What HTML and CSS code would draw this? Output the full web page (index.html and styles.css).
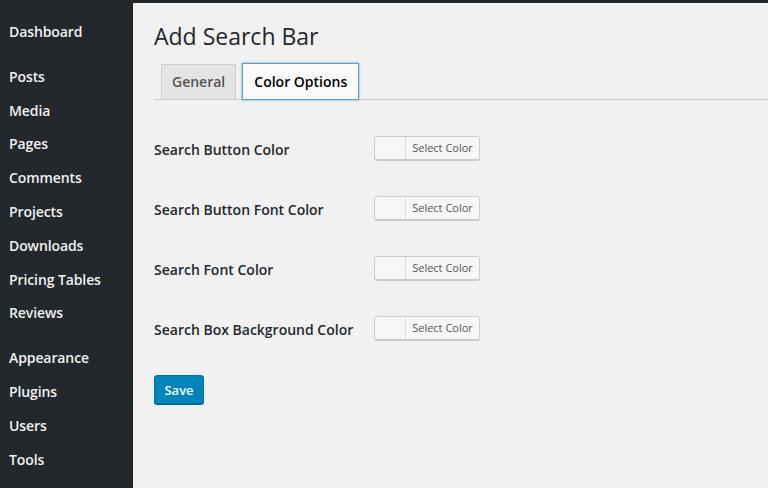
FILE: index.html
```html
<!DOCTYPE html>
<html>
<head>
<meta charset="utf-8">
<link rel="stylesheet" href="styles.css">
</head>
<body>
<div class="topbar"></div>
<div class="layout">
  <nav class="sidebar">
    <ul class="menu">
      <li class="item first">Dashboard</li>
      <li class="item sep">Posts</li>
      <li class="item">Media</li>
      <li class="item">Pages</li>
      <li class="item">Comments</li>
      <li class="item">Projects</li>
      <li class="item">Downloads</li>
      <li class="item">Pricing Tables</li>
      <li class="item">Reviews</li>
      <li class="item sep">Appearance</li>
      <li class="item">Plugins</li>
      <li class="item">Users</li>
      <li class="item">Tools</li>
    </ul>
  </nav>
  <main class="content">
    <h1 class="title">Add Search Bar</h1>
    <div class="tabs">
      <span class="tab">General</span>
      <span class="tab active">Color Options</span>
    </div>
    <div class="form">
      <div class="row">
        <span class="label">Search Button Color</span>
        <span class="picker"><span class="swatch"></span><span class="pick-btn">Select Color</span></span>
      </div>
      <div class="row">
        <span class="label">Search Button Font Color</span>
        <span class="picker"><span class="swatch"></span><span class="pick-btn">Select Color</span></span>
      </div>
      <div class="row">
        <span class="label">Search Font Color</span>
        <span class="picker"><span class="swatch"></span><span class="pick-btn">Select Color</span></span>
      </div>
      <div class="row">
        <span class="label">Search Box Background Color</span>
        <span class="picker"><span class="swatch"></span><span class="pick-btn">Select Color</span></span>
      </div>
    </div>
    <button class="save">Save</button>
  </main>
</div>
</body>
</html>
```
FILE: styles.css
```css
* { box-sizing: border-box; }
html, body { margin: 0; padding: 0; height: 100%; }
body {
  font-family: "Open Sans", "Noto Sans", sans-serif;
  background: #f1f1f1;
  overflow: hidden;
}
.topbar { height: 3px; background: #23282d; }
.layout { display: flex; height: 485px; }
.sidebar {
  width: 133px;
  flex: none;
  background: #23282d;
  border-right: 1px solid #1a1d21;
}
.menu { list-style: none; margin: 0; padding: 0; }
.item {
  color: #f0f0f0;
  font-size: 14px;
  font-weight: 600;
  height: 33.8px;
  line-height: 33.8px;
  padding-left: 9px;
  letter-spacing: -0.1px;
}
.item.first { margin-top: 12px; }
.item.sep { margin-top: 11px; }
.content { flex: 1; padding: 0 0 0 21px; }
.title {
  margin: 15px 0 0;
  font-size: 23px;
  font-weight: 400;
  color: #23282d;
  line-height: 36px;
  height: 43px;
}
.tabs {
  display: flex;
  align-items: flex-end;
  gap: 6px;
  padding-left: 7px;
  border-bottom: 1px solid #ccc;
  height: 39px;
}
.tab {
  display: block;
  height: 35px;
  line-height: 33px;
  padding: 0 10px;
  background: #e4e4e4;
  border: 1px solid #ccc;
  border-bottom: none;
  font-size: 14px;
  font-weight: 600;
  color: #555;
  margin-bottom: 0;
}
.tab.active {
  background: #f9f9f9;
  color: #000;
  height: 37px;
  line-height: 35px;
  border: 1px solid #5b9dd9;
  box-shadow: 0 0 2px rgba(30,140,190,.8);
  margin-bottom: -1px;
  padding: 0 11px;
}
.form { padding-top: 36px; }
.row {
  display: flex;
  align-items: center;
  height: 24px;
  margin-bottom: 36px;
}
.label {
  width: 220px;
  font-size: 14px;
  font-weight: 600;
  color: #23282d;
  padding-top: 2px;
}
.picker {
  display: flex;
  height: 24px;
  border: 1px solid #ccc;
  border-radius: 3px;
  box-shadow: 0 1px 0 #ccc;
  background: #f7f7f7;
  overflow: hidden;
}
.swatch { width: 31px; background: #f7f7f7; border-right: 1px solid #ddd; }
.pick-btn {
  width: 73px;
  font-size: 11px;
  color: #555;
  line-height: 21px;
  text-align: center;
  background: #f7f7f7;
}
.save {
  display: block;
  margin-top: -1px;
  width: 50px;
  height: 29px;
  background: #0085ba;
  border: 1px solid #0073aa;
  border-radius: 3px;
  box-shadow: 0 1px 0 #006799;
  color: #fff;
  font-family: "Open Sans", "Noto Sans", sans-serif;
  font-size: 13px;
  font-weight: 600;
  padding: 0;
}
```
